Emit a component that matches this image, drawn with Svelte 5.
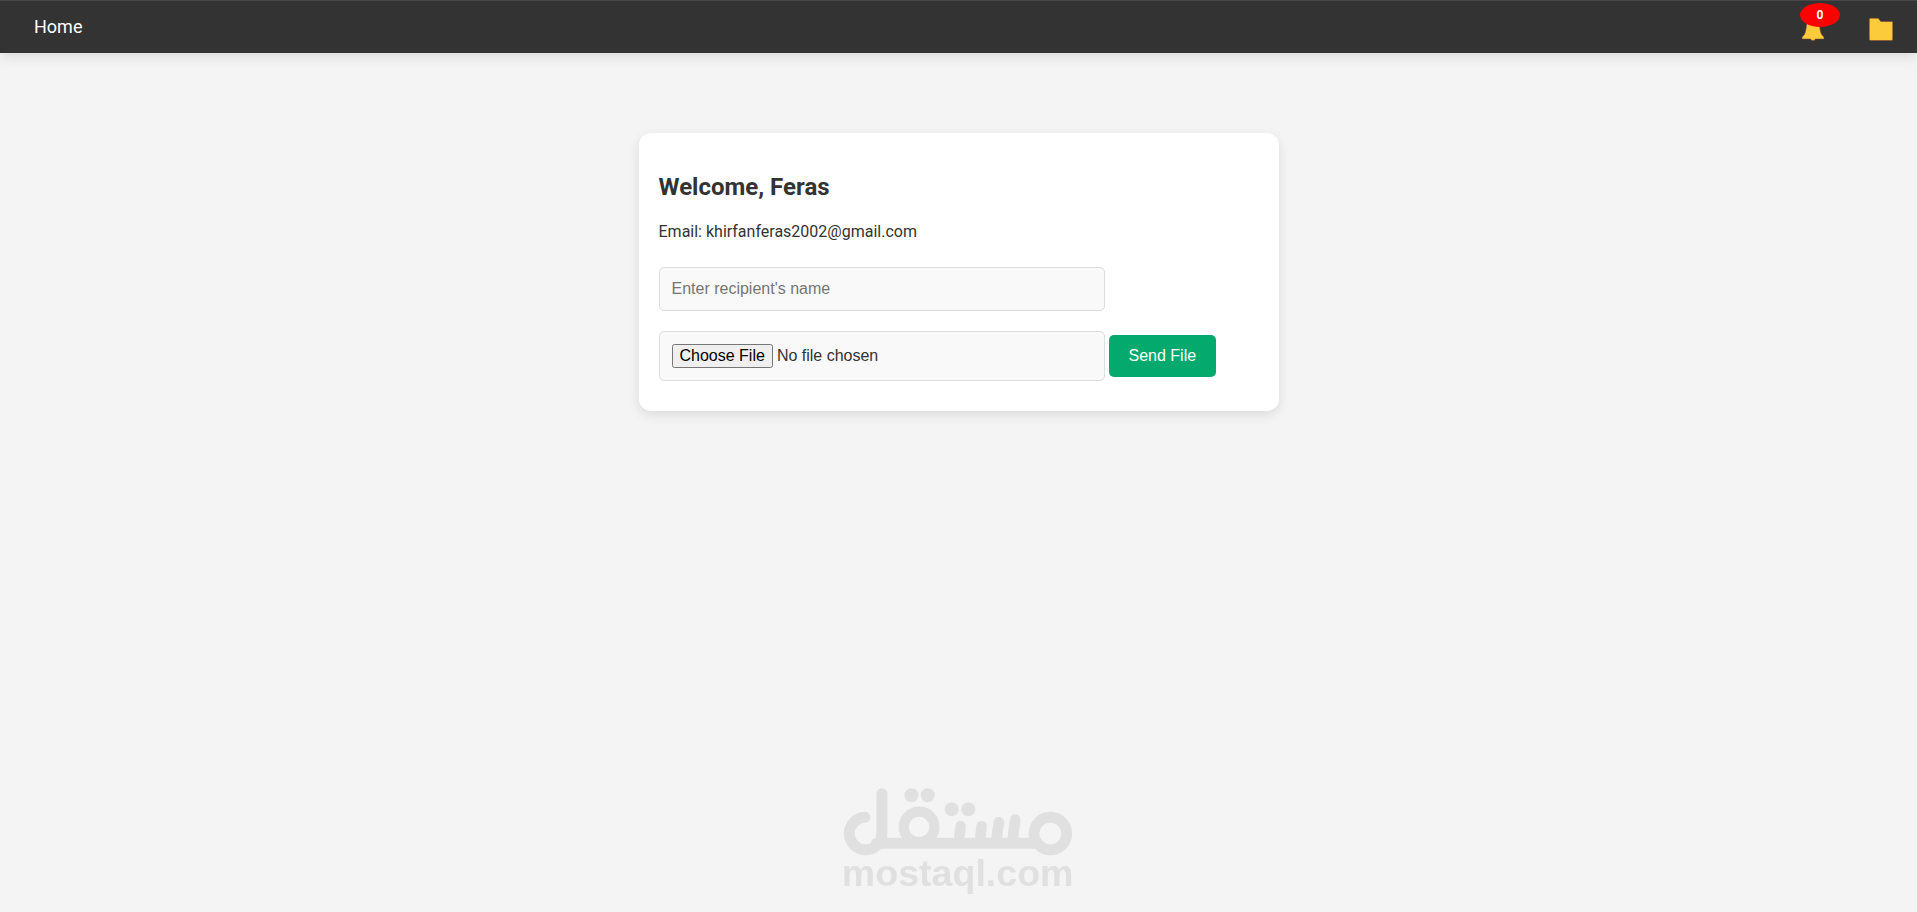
<script>
  let userName = "Feras";
  let email = "khirfanferas2002@gmail.com";
  let notificationCount = 0;
  let recipient = "";

  function sendFile() {
    console.log("send file to", recipient);
  }
</script>

<div class="page">
  <nav class="navbar">
    <a class="home" href="/">Home</a>
    <div class="nav-icons">
      <a class="icon" href="/notifications" aria-label="Notifications">
        <svg width="24" height="24" viewBox="0 0 24 24">
          <path
            d="M12 1C11 1 10.300 1.800 10.300 2.700C7.500 3.400 5.700 5.700 5.400 9C5 13 4.500 15.500 3.200 17.700C2.500 18.900 1 19.600 1 21V22H9.700C9.900 23 10.900 23.500 12 23.500S14.100 23 14.300 22H23V21C23 19.600 21.500 18.900 20.800 17.700C19.500 15.500 19 13 18.600 9C18.300 5.700 16.500 3.400 13.700 2.700C13.700 1.800 13 1 12 1Z"
            fill="#fccb3c"
            stroke="#7a3f33"
            stroke-width="0.500"
          />
        </svg>
        <span class="badge">{notificationCount}</span>
      </a>
      <a class="icon" href="/files" aria-label="Files">
        <svg width="24" height="24" viewBox="0 0 24 24">
          <path
            d="M0.300 2.500Q0.300 1.300 1.500 1.300H8.500Q9.300 1.300 9.900 2L11.800 4.500H22.700Q23.700 4.500 23.700 5.500V22.200Q23.700 23.500 22.400 23.500H1.600Q0.300 23.500 0.300 22.200Z"
            fill="#fccb3c"
            stroke="#7a3f33"
            stroke-width="0.500"
          />
        </svg>
      </a>
    </div>
  </nav>

  <main class="container">
    <h2>Welcome, {userName}</h2>
    <p>Email: {email}</p>
    <form on:submit|preventDefault={sendFile}>
      <input
        type="text"
        placeholder="Enter recipient's name"
        aria-label="Recipient's name"
        bind:value={recipient}
      />
      <div class="file-row">
        <input type="file" aria-label="File" />
        <button type="submit">Send File</button>
      </div>
    </form>
  </main>

  <footer class="watermark">
    <svg viewBox="60 45 710 335" role="img" aria-label="mostaql.com">
      <g
        fill="none"
        stroke="#e0e0e0"
        stroke-width="33"
        stroke-linecap="round"
      >
        <path d="M135 142a49 49 0 1 0 51 49V71" />
        <path d="M170 220H660" />
        <circle cx="298" cy="171" r="46" stroke-width="31" />
        <circle cx="693" cy="191" r="49" />
        <path
          d="M423 169L418 214M486 169L481 214M538 157L530 214M587 149L579 214"
          stroke-width="32"
        />
      </g>
      <!-- keeps the loops of the letters open over the baseline -->
      <circle cx="693" cy="191" r="32" fill="#f4f4f4" />
      <circle cx="298" cy="171" r="30" fill="#f4f4f4" />
      <g fill="#e0e0e0">
        <circle cx="275" cy="76" r="21" />
        <circle cx="324" cy="76" r="21" />
        <circle cx="396" cy="118" r="21" />
        <circle cx="446" cy="118" r="21" />
        <text x="414" y="348" text-anchor="middle">mostaql.com</text>
      </g>
    </svg>
  </footer>
</div>

<style>
  :global(body) {
    margin: 0;
    background-color: #f4f4f4;
    color: #333;
    font-family: Roboto, "Liberation Sans", sans-serif;
  }

  .page {
    display: flow-root;
    min-height: 100vh;
  }

  .navbar {
    display: flex;
    justify-content: space-between;
    align-items: center;
    height: 52px;
    padding: 0 20px;
    background-color: #333;
    border-top: 1px solid #484848;
    box-shadow: 0 4px 12px rgba(0, 0, 0, 0.1);
  }
  .home {
    padding: 0 14px 2px;
    color: white;
    font-size: 18px;
    text-decoration: none;
  }
  .nav-icons {
    display: flex;
    gap: 44px;
    padding: 4px 4px 0 0;
  }
  .icon {
    position: relative;
    display: block;
    height: 24px;
  }
  .icon svg {
    display: block;
  }
  .badge {
    position: absolute;
    top: -14px;
    left: -1px;
    width: 40px;
    height: 24px;
    border-radius: 50%;
    background-color: red;
    color: white;
    font-size: 12px;
    font-weight: bold;
    line-height: 24px;
    text-align: center;
  }

  .container {
    max-width: 600px;
    margin: 80px auto 0;
    padding: 20px;
    background-color: white;
    border-radius: 12px;
    box-shadow: 0 4px 12px rgba(0, 0, 0, 0.1);
  }
  h2 {
    margin: 20px 0;
    font-size: 24px;
    line-height: 29px;
  }
  p {
    margin: 0;
    font-size: 16px;
    line-height: 19px;
  }
  form {
    padding: 26px 0 10px;
  }
  input {
    width: 70%;
    padding: 12px;
    border: 1px solid #ddd;
    border-radius: 5px;
    background-color: #f9f9f9;
    color: #333;
    font-family: "Liberation Sans", Arial, sans-serif;
    font-size: 16px;
  }
  input[type="text"] {
    display: block;
  }
  .file-row {
    display: flex;
    align-items: center;
    gap: 4px;
    margin-top: 20px;
  }
  button {
    padding: 12px 20px;
    border: none;
    border-radius: 5px;
    background-color: #04aa6d;
    color: white;
    font-family: "Liberation Sans", Arial, sans-serif;
    font-size: 16px;
    cursor: pointer;
  }

  .watermark {
    position: fixed;
    bottom: 16px;
    left: 50%;
    width: 236px;
    margin-left: -119px;
    pointer-events: none;
  }
  .watermark svg {
    display: block;
    width: 100%;
  }
  .watermark text {
    font-family: "Liberation Sans", Arial, sans-serif;
    font-size: 113px;
    font-weight: bold;
  }
</style>
